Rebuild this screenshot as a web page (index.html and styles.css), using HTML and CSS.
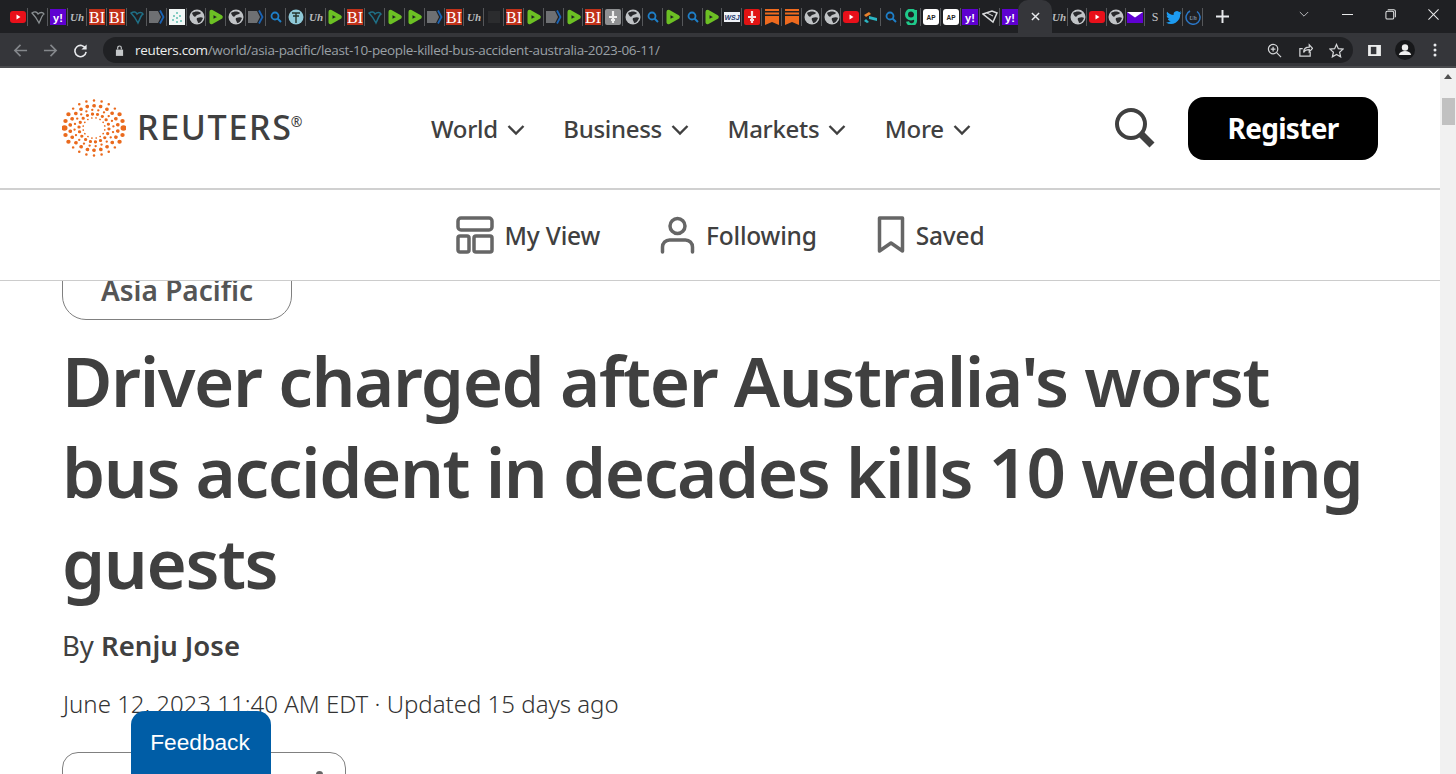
FILE: index.html
```html
<!DOCTYPE html>
<html lang="en">
<head>
<meta charset="utf-8">
<title>Driver charged after Australia's worst bus accident in decades kills 10 wedding guests | Reuters</title>
<link rel="stylesheet" href="styles.css">
</head>
<body>
<svg class="sprite" aria-hidden="true">
  <defs>
    <symbol id="yt" viewBox="0 0 16 16"><rect y="2" width="16" height="12" rx="3" fill="#e8101a"/><path d="M6.500 5.500v5l4-2.500z" fill="#fff"/></symbol>
    <symbol id="heart" viewBox="0 0 16 16"><path d="M2 4c3-2 5-1 6 1 2-2 5-2 6 0-2 1-3 5-5 9C7 10 5 7 2 4z" fill="none" stroke="#8a8f92" stroke-width="1.300"/></symbol>
    <symbol id="heartb" viewBox="0 0 16 16"><path d="M2 4c3-2 5-1 6 1 2-2 5-2 6 0-2 1-3 5-5 9C7 10 5 7 2 4z" fill="none" stroke="#1f6f86" stroke-width="1.500"/></symbol>
    <symbol id="yh" viewBox="0 0 16 16"><rect width="16" height="16" fill="#5f01d1"/><text x="8" y="12.500" text-anchor="middle" class="fav-y">y!</text></symbol>
    <symbol id="uh" viewBox="0 0 16 16"><text x="8" y="12" text-anchor="middle" class="fav-uh">Uh</text></symbol>
    <symbol id="bi" viewBox="0 0 16 16"><rect width="16" height="16" fill="#c1321a"/><text x="8" y="13.500" text-anchor="middle" class="fav-bi">BI</text></symbol>
    <symbol id="dd" viewBox="0 0 16 16"><path d="M0 2h9l3 6-3 6H0z" fill="#6e7073"/><path d="M11 1.500l3.500 6.500-3.500 6.500" fill="none" stroke="#1a63b5" stroke-width="1.800"/></symbol>
    <symbol id="grid" viewBox="0 0 16 16"><rect width="16" height="16" fill="#f2f7f6"/><g fill="#5fbfb0"><circle cx="8" cy="4" r="1"/><circle cx="5" cy="7" r="1"/><circle cx="11" cy="7" r="1"/><circle cx="8" cy="9" r="1"/><circle cx="4" cy="11" r="1"/><circle cx="12" cy="12" r="1"/><circle cx="8" cy="13" r="1"/></g></symbol>
    <symbol id="globe" viewBox="0 0 16 16"><circle cx="8" cy="8" r="7.500" fill="#c0c3c6"/><path d="M3 4c3-2 7-2 9 0-1 2-4 1-5 3s-3 0-4-3zM8 9c3-1 5-1 6 0-1 3-3 5-5 5 0-2-2-3-1-5z" fill="#28292c"/></symbol>
    <symbol id="play" viewBox="0 0 16 16"><path d="M3.500 2.800 12.800 8l-9.300 5.200z" fill="#1f2023" stroke="#6cc024" stroke-width="4" stroke-linejoin="round"/></symbol>
    <symbol id="search" viewBox="0 0 16 16"><circle cx="7" cy="7" r="3.500" fill="none" stroke="#1e7fc8" stroke-width="1.800"/><path d="m9.500 9.500 3.500 3.500" stroke="#1e7fc8" stroke-width="2"/></symbol>
    <symbol id="tree" viewBox="0 0 16 16"><circle cx="8" cy="8" r="7.500" fill="#8fc9d8"/><path d="M4 4h8M8 4v10M5 7h6" stroke="#24352e" stroke-width="1.400"/></symbol>
    <symbol id="mic" viewBox="0 0 16 16"><rect width="16" height="16" rx="2" fill="#8f9092"/><path d="M8 2v5M4 8h8M6 11h4M8 8v6" stroke="#eee" stroke-width="2.200"/></symbol>
    <symbol id="wsj" viewBox="0 0 16 16"><rect y="3" width="16" height="10" fill="#eef1f6"/><text x="8" y="11" text-anchor="middle" class="fav-wsj">WSJ</text></symbol>
    <symbol id="red" viewBox="0 0 16 16"><rect width="16" height="16" rx="2" fill="#e11313"/><path d="M8 2v5M4 8h8M6 11h4M8 8v6" stroke="#f4dede" stroke-width="2.200"/></symbol>
    <symbol id="bm" viewBox="0 0 16 16"><path d="M1 0h14v2H1zM1 3.500h14v2H1zM1 7h14v9l-7-3-7 3z" fill="#ee6a1f"/></symbol>
    <symbol id="teal" viewBox="0 0 16 16"><path d="M1 6l5-3 2 2-5 3z" fill="#e9822c"/><path d="M6 7l8 2v3l-8-2z" fill="#2bb6c4"/><path d="M3 10l3 3-2 1-3-2z" fill="#2bb6c4"/></symbol>
    <symbol id="gg" viewBox="0 0 16 16"><path d="M3.500 5.500a4.500 4.500 0 1 0 9 0 4.500 4.500 0 1 0-9 0zM12.500 1v10a4 4 0 0 1-8 1.500" fill="none" stroke="#1fc98a" stroke-width="3"/></symbol>
    <symbol id="ap" viewBox="0 0 16 16"><rect width="16" height="16" rx="3" fill="#fff"/><text x="8" y="10.500" text-anchor="middle" class="fav-ap">AP</text></symbol>
    <symbol id="gem" viewBox="0 0 16 16"><path d="M1 5l9-3 5 2-4 9z" fill="none" stroke="#d8dadc" stroke-width="1.500"/><path d="M5 4l6 3" stroke="#d8dadc"/></symbol>
    <symbol id="mail" viewBox="0 0 16 16"><path d="M0 3h16v11H0z" fill="#5f01d1"/><path d="M0 3h16L8 8.500z" fill="#fff"/></symbol>
    <symbol id="ss" viewBox="0 0 16 16"><text x="8" y="12" text-anchor="middle" class="fav-s">S</text></symbol>
    <symbol id="tw" viewBox="0 0 16 16"><path d="M15.500 3.500c-.6.300-1.200.4-1.800.5.700-.4 1.200-1 1.400-1.800-.6.400-1.300.6-2 .8A3.200 3.200 0 0 0 7.700 6C5 5.900 2.700 4.600 1.100 2.700c-.8 1.400-.4 3.300 1 4.300-.5 0-1-.2-1.400-.4 0 1.600 1.100 2.900 2.600 3.200-.5.100-1 .2-1.500.1.400 1.300 1.600 2.200 3 2.200A6.500 6.500 0 0 1 0 13.400 9.200 9.200 0 0 0 14.200 5.200c.5-.5 1-1 1.300-1.700z" fill="#1d9bf0"/></symbol>
    <symbol id="ring" viewBox="0 0 16 16"><path d="M5 2a7 7 0 1 0 7 .5" fill="none" stroke="#2a76c6" stroke-width="1.500"/><text x="8" y="10.500" text-anchor="middle" class="fav-ring">Uh</text></symbol>
    <symbol id="dark" viewBox="0 0 16 16"><rect x="2" y="2" width="12" height="12" fill="#2b2c2e"/></symbol>
    <symbol id="chev" viewBox="0 0 18 12"><path d="m1.500 2 7.500 7.500L16.500 2" fill="none" stroke="currentColor" stroke-width="2.400"/></symbol>
  </defs>
</svg>

<header class="chrome">
  <div class="tabstrip">
    <div class="tabs">
      <span class="tab"><svg class="fav"><use href="#yt"/></svg></span>
      <span class="tab"><svg class="fav"><use href="#heart"/></svg></span>
      <span class="tab"><svg class="fav"><use href="#yh"/></svg></span>
      <span class="tab"><svg class="fav"><use href="#uh"/></svg></span>
      <span class="tab"><svg class="fav"><use href="#bi"/></svg></span>
      <span class="tab"><svg class="fav"><use href="#bi"/></svg></span>
      <span class="tab"><svg class="fav"><use href="#heartb"/></svg></span>
      <span class="tab"><svg class="fav"><use href="#dd"/></svg></span>
      <span class="tab"><svg class="fav"><use href="#grid"/></svg></span>
      <span class="tab"><svg class="fav"><use href="#globe"/></svg></span>
      <span class="tab"><svg class="fav"><use href="#play"/></svg></span>
      <span class="tab"><svg class="fav"><use href="#globe"/></svg></span>
      <span class="tab"><svg class="fav"><use href="#dd"/></svg></span>
      <span class="tab"><svg class="fav"><use href="#search"/></svg></span>
      <span class="tab"><svg class="fav"><use href="#tree"/></svg></span>
      <span class="tab"><svg class="fav"><use href="#uh"/></svg></span>
      <span class="tab"><svg class="fav"><use href="#play"/></svg></span>
      <span class="tab"><svg class="fav"><use href="#bi"/></svg></span>
      <span class="tab"><svg class="fav"><use href="#heartb"/></svg></span>
      <span class="tab"><svg class="fav"><use href="#play"/></svg></span>
      <span class="tab"><svg class="fav"><use href="#play"/></svg></span>
      <span class="tab"><svg class="fav"><use href="#dd"/></svg></span>
      <span class="tab"><svg class="fav"><use href="#bi"/></svg></span>
      <span class="tab"><svg class="fav"><use href="#uh"/></svg></span>
      <span class="tab"><svg class="fav"><use href="#dark"/></svg></span>
      <span class="tab"><svg class="fav"><use href="#bi"/></svg></span>
      <span class="tab"><svg class="fav"><use href="#play"/></svg></span>
      <span class="tab"><svg class="fav"><use href="#dd"/></svg></span>
      <span class="tab"><svg class="fav"><use href="#play"/></svg></span>
      <span class="tab"><svg class="fav"><use href="#bi"/></svg></span>
      <span class="tab"><svg class="fav"><use href="#mic"/></svg></span>
      <span class="tab"><svg class="fav"><use href="#globe"/></svg></span>
      <span class="tab"><svg class="fav"><use href="#search"/></svg></span>
      <span class="tab"><svg class="fav"><use href="#play"/></svg></span>
      <span class="tab"><svg class="fav"><use href="#search"/></svg></span>
      <span class="tab"><svg class="fav"><use href="#play"/></svg></span>
      <span class="tab"><svg class="fav"><use href="#wsj"/></svg></span>
      <span class="tab"><svg class="fav"><use href="#red"/></svg></span>
      <span class="tab"><svg class="fav"><use href="#bm"/></svg></span>
      <span class="tab"><svg class="fav"><use href="#bm"/></svg></span>
      <span class="tab"><svg class="fav"><use href="#globe"/></svg></span>
      <span class="tab"><svg class="fav"><use href="#globe"/></svg></span>
      <span class="tab"><svg class="fav"><use href="#yt"/></svg></span>
      <span class="tab"><svg class="fav"><use href="#teal"/></svg></span>
      <span class="tab"><svg class="fav"><use href="#search"/></svg></span>
      <span class="tab"><svg class="fav"><use href="#gg"/></svg></span>
      <span class="tab"><svg class="fav"><use href="#ap"/></svg></span>
      <span class="tab"><svg class="fav"><use href="#ap"/></svg></span>
      <span class="tab"><svg class="fav"><use href="#yh"/></svg></span>
      <span class="tab"><svg class="fav"><use href="#gem"/></svg></span>
      <span class="tab tab-last"><svg class="fav"><use href="#yh"/></svg></span>
      <span class="tab-active"><svg class="tab-x" viewBox="0 0 10 10"><path d="m1 1 8 8M9 1 1 9"/></svg></span>
      <span class="tab narrow"><svg class="fav"><use href="#uh"/></svg></span>
      <span class="tab narrow"><svg class="fav"><use href="#globe"/></svg></span>
      <span class="tab narrow"><svg class="fav"><use href="#yt"/></svg></span>
      <span class="tab narrow"><svg class="fav"><use href="#globe"/></svg></span>
      <span class="tab narrow"><svg class="fav"><use href="#mail"/></svg></span>
      <span class="tab narrow"><svg class="fav"><use href="#ss"/></svg></span>
      <span class="tab narrow"><svg class="fav"><use href="#tw"/></svg></span>
      <span class="tab narrow"><svg class="fav"><use href="#ring"/></svg></span>
      <svg class="newtab" viewBox="0 0 12 12"><path d="M6 0v12M0 6h12"/></svg>
    </div>
    <div class="winctl">
      <svg class="win-chev" viewBox="0 0 12 8"><path d="m1 1 5 5 5-5"/></svg>
      <svg class="win-btn" viewBox="0 0 12 12"><path d="M0 6h12"/></svg>
      <svg class="win-btn" viewBox="0 0 12 12"><rect x="1" y="2.500" width="8.500" height="8.500" rx="1.500"/><path d="M3 .8h6.500A1.800 1.800 0 0 1 11.300 2.600V9"/></svg>
      <svg class="win-btn" viewBox="0 0 12 12"><path d="m.5.500 11 11M11.500.500l-11 11"/></svg>
    </div>
  </div>
  <div class="toolbar">
    <div class="navbtns">
      <svg class="tool dim" viewBox="0 0 16 16"><path d="M15 8H2M8 2 2 8l6 6"/></svg>
      <svg class="tool dim" viewBox="0 0 16 16"><path d="M1 8h13M8 2l6 6-6 6"/></svg>
      <svg class="tool" viewBox="0 0 16 16"><path d="M13.500 6A6 6 0 1 0 14 9.500"/><path class="fill" d="M14.500 1.500v5.500H9z"/></svg>
    </div>
    <div class="omnibox">
      <svg class="lock" viewBox="0 0 10 12"><path d="M1 5h8v7H1z" fill="#c4c7c9"/><path d="M3 5V3a2 2 0 0 1 4 0v2" fill="none" stroke="#c4c7c9" stroke-width="1.300"/></svg>
      <span class="url"><b class="host">reuters.com</b>/world/asia-pacific/least-10-people-killed-bus-accident-australia-2023-06-11/</span>
      <div class="omni-right">
        <svg class="tool small" viewBox="0 0 16 16"><circle cx="6.500" cy="6.500" r="5"/><path d="M10 10l5 5M4 6.500h5M6.500 4v5"/></svg>
        <svg class="tool small" viewBox="0 0 16 16"><path d="M13 9.500V14H2V6h3M6 10c0-4 3-5.500 6-5.500V2l3.500 3.800L12 9.500V7c-3 0-5 1-6 3z"/></svg>
        <svg class="tool small" viewBox="0 0 16 16"><path d="M8 1.500 10 6l5 .5-3.700 3.300 1.100 5L8 12.200l-4.400 2.600 1.100-5L1 6.500 6 6z"/></svg>
      </div>
    </div>
    <div class="toolright">
      <svg class="panel" viewBox="0 0 14 12"><rect width="14" height="12" fill="#eceded"/><rect x="3" y="2" width="6" height="8" fill="#35363a"/></svg>
      <svg class="avatar" viewBox="0 0 20 20"><circle cx="10" cy="10" r="10" fill="#17181a"/><circle cx="10" cy="7.500" r="3.200" fill="#eee"/><path d="M3.800 15c.8-3 3.200-4 6.200-4s5.400 1 6.200 4z" fill="#eee"/></svg>
      <svg class="kebab" viewBox="0 0 4 14"><circle cx="2" cy="2" r="1.500"/><circle cx="2" cy="7" r="1.500"/><circle cx="2" cy="12" r="1.500"/></svg>
    </div>
  </div>
</header>

<div class="viewport">
  <div class="page">
    <div class="masthead">
      <a class="brand">
        <svg class="brand-mark" viewBox="0 0 64 58">
          <g transform="translate(32 29) scale(1 .93)" fill="none" stroke="#ea6a1d" stroke-linecap="round">
            <circle class="r" r="29.500" pathLength="24" stroke-width="2.600"/>
            <circle class="r-mid" r="29.500" pathLength="24" stroke-width="4.400"/>
            <circle class="r-big" r="29.500" pathLength="24" stroke-width="6"/>
            <circle class="r" r="24" pathLength="22" stroke-width="3.800" transform="rotate(8)"/>
            <circle class="r" r="19.500" pathLength="20" stroke-width="2.400" transform="rotate(-5)"/>
            <circle class="r" r="15" pathLength="18" stroke-width="3.300" transform="rotate(4)"/>
            <circle class="r" r="11" pathLength="16" stroke-width="1.800" transform="rotate(11)"/>
          </g>
        </svg>
        <span class="wordmark">REUTERS<sup class="reg">®</sup></span>
      </a>
      <nav class="mainnav">
        <a class="navitem">World<svg class="chev"><use href="#chev"/></svg></a>
        <a class="navitem">Business<svg class="chev"><use href="#chev"/></svg></a>
        <a class="navitem">Markets<svg class="chev"><use href="#chev"/></svg></a>
        <a class="navitem">More<svg class="chev"><use href="#chev"/></svg></a>
      </nav>
      <svg class="searchicon" viewBox="0 0 40 40"><circle cx="16" cy="16" r="14" fill="none" stroke="#404040" stroke-width="4"/><path d="m26 26 11 11" stroke="#404040" stroke-width="7"/></svg>
      <a class="register">Register</a>
    </div>
    <div class="subnav">
      <a class="subitem">
        <svg class="ico-view" viewBox="0 0 38 38"><g fill="none" stroke="#666" stroke-width="3.500"><rect x="2" y="2" width="34" height="12" rx="3"/><rect x="2" y="20" width="11" height="16" rx="2"/><rect x="18" y="20" width="18" height="16" rx="2"/></g></svg>
        My View
      </a>
      <a class="subitem">
        <svg class="ico-follow" viewBox="0 0 34 38"><g fill="none" stroke="#666" stroke-width="3.500" stroke-linecap="round"><circle cx="17" cy="10" r="7.500"/><path d="M2 36v-5a7 7 0 0 1 7-7h16a7 7 0 0 1 7 7v5"/></g></svg>
        Following
      </a>
      <a class="subitem">
        <svg class="ico-saved" viewBox="0 0 28 38"><path d="M2.500 2h23v33L14 27 2.500 35z" fill="none" stroke="#666" stroke-width="3.500" stroke-linejoin="round"/></svg>
        Saved
      </a>
    </div>
    <main class="article">
      <a class="topic">Asia Pacific</a>
      <h1 class="headline">Driver charged after Australia's worst bus accident in decades kills 10 wedding guests</h1>
      <p class="byline">By <b class="author">Renju Jose</b></p>
      <p class="dateline">June 12, 2023 11:40 AM EDT · Updated 15 days ago</p>
      <div class="sharebox"><span class="sharedot"></span></div>
    </main>
    <a class="feedback">Feedback</a>
  </div>
  <div class="scrollbar">
    <svg class="sb-up" viewBox="0 0 8 5"><path d="M4 0l4 5H0z"/></svg>
    <div class="sb-thumb"></div>
  </div>
</div>
</body>
</html>
```
FILE: styles.css
```css
* { box-sizing: border-box; }
html, body { margin: 0; height: 100%; overflow: hidden; }
body { display: flex; flex-direction: column; background: #fff; font-family: "Noto Sans", "Open Sans", sans-serif; color: #404040; }
a { color: inherit; text-decoration: none; }
.sprite { width: 0; height: 0; position: absolute; }

/* browser chrome */
.chrome { flex: none; height: 68px; background: #202124; }
.tabstrip { height: 33px; display: flex; background: #1f2023; }
.tabs { display: flex; align-items: center; padding-left: 8px; flex: 1; }
.tab { width: 19.85px; height: 33px; display: flex; align-items: center; justify-content: center; position: relative; flex: none; }
.tab::after { content: ""; position: absolute; right: 0; top: 8px; height: 18px; width: 1px; background: #55575a; }
.tab-last::after { display: none; }
.tab.narrow { width: 19.2px; }
.fav { width: 16px; height: 16px; display: block; }
.fav-y { font: 800 11px "Liberation Sans", sans-serif; fill: #fff; }
.fav-uh { font: italic 700 11px "Liberation Serif", serif; fill: #b8babc; }
.fav-bi { font: 400 16px "Liberation Serif", serif; fill: #fff; }
.fav-wsj { font: italic 800 7px "Liberation Sans", sans-serif; fill: #1e3a6e; }
.fav-ap { font: 800 6.500px "Liberation Sans", sans-serif; fill: #222; }
.fav-s { font: 400 12px "Liberation Serif", serif; fill: #c4c6c8; }
.fav-ring { font: italic 700 6px "Liberation Serif", serif; fill: #7d8ea3; }
.tab-active { width: 34px; height: 33px; flex: none; background: #35363a; border-radius: 10px 10px 0 0; display: flex; align-items: center; justify-content: center; margin: 0 -3px 0 -2px; }
.tab-x { width: 9px; height: 9px; stroke: #e8eaed; stroke-width: 1.600; fill: none; }
.newtab { width: 13px; height: 13px; margin-left: 13px; stroke: #e8eaed; stroke-width: 1.800; fill: none; flex: none; }
.winctl { display: flex; align-items: center; flex: none; width: 160px; height: 29px; padding-left: 3px; }
.win-chev { width: 10px; height: 7px; fill: none; stroke: #c4c6c8; stroke-width: 1.100; margin-right: 33px; flex: none; }
.win-btn { width: 11px; height: 11px; fill: none; stroke: #e8e9ea; stroke-width: 1.100; margin-right: 32px; flex: none; }
.toolbar { height: 35px; display: flex; align-items: center; background: #35363a; border-bottom: 2px solid #4a4b4e; padding-top: 1px; }
.navbtns { width: 103px; display: flex; align-items: center; gap: 15px; padding-left: 13px; flex: none; }
.tool { width: 15px; height: 15px; fill: none; stroke: #e8eaed; stroke-width: 1.700; flex: none; }
.tool.dim { stroke: #85888c; }
.tool .fill { fill: #e8eaed; stroke: none; }
.tool.small { stroke: #d4d6d8; stroke-width: 1.300; }
.omnibox { width: 1250px; height: 26px; flex: none; border-radius: 13px; background: #202124; display: flex; align-items: center; padding-left: 12px; }
.lock { width: 9px; height: 11px; flex: none; }
.url { margin-left: 11px; font: 400 13.500px "Open Sans", sans-serif; color: #9aa0a6; white-space: nowrap; letter-spacing: -.33px; }
.host { font-weight: 400; color: #eceded; }
.omni-right { margin-left: auto; display: flex; gap: 16px; padding-right: 9px; }
.toolright { display: flex; align-items: center; flex: 1; padding-left: 15px; }
.panel { width: 13px; height: 11px; flex: none; }
.avatar { width: 20px; height: 20px; margin-left: 14px; flex: none; }
.kebab { width: 4px; height: 14px; margin-left: 18px; fill: #e8eaed; flex: none; }

/* page */
.viewport { flex: 1; min-height: 0; display: flex; }
.page { flex: 1; min-width: 0; display: flex; flex-direction: column; position: relative; overflow: hidden; }
.scrollbar { width: 16px; flex: none; background: #f1f1f1; display: flex; flex-direction: column; align-items: center; padding-top: 6px; }
.sb-up { width: 8px; height: 5px; fill: #505050; }
.sb-thumb { width: 13px; height: 27px; margin-top: 19px; background: #c1c1c1; }

.masthead { height: 122px; flex: none; display: flex; align-items: center; padding: 0 62px; border-bottom: 2px solid #d0d0d0; position: relative; z-index: 1; background: #fff; }
.brand { display: flex; align-items: center; gap: 11px; width: 369px; flex: none; }
.brand-mark { width: 64px; height: 58px; flex: none; }
.wordmark { font: 500 34px "Noto Sans", sans-serif; letter-spacing: 1.700px; color: #404040; line-height: 1; margin-top: -2px; }
.reg { font-size: 14px; vertical-align: 13px; line-height: 0; font-weight: 400; letter-spacing: 0; margin-left: -2px; }
.r { stroke-dasharray: 0 1; }
.r-mid { stroke-dasharray: 0 1 0 1 0 1 0 1 0 8 0 1 0 1 0 1 0 1 0 8; stroke-dashoffset: 2; }
.r-big { stroke-dasharray: 0 12; }
.mainnav { display: flex; gap: 38.500px; flex: none; }
.navitem { display: flex; align-items: center; gap: 9px; font: 500 24px "Noto Sans", sans-serif; letter-spacing: -.3px; color: #404040; }
.chev { width: 18px; height: 12px; color: #404040; margin-top: 3px; }
.searchicon { width: 40px; height: 40px; margin-left: auto; flex: none; }
.register { width: 190px; height: 63px; margin-left: 33px; flex: none; background: #000; color: #fff; border-radius: 16px; display: flex; align-items: center; justify-content: center; font: 700 28px "Noto Sans", sans-serif; letter-spacing: -.7px; }

.subnav { height: 91px; flex: none; display: flex; align-items: center; justify-content: center; gap: 60px; border-bottom: 1px solid #ccc; background: #fff; position: relative; z-index: 1; }
.subitem { display: flex; align-items: center; gap: 11px; font: 500 24.500px "Noto Sans", sans-serif; letter-spacing: -.2px; color: #404040; }
.ico-view { width: 38px; height: 38px; }
.ico-follow { width: 35px; height: 38px; }
.ico-saved { width: 28px; height: 38px; }

.article { flex: 1; padding: 0 62px; min-height: 0; }
.topic { display: block; width: 230px; height: 80px; margin-top: -41px; border: 1.500px solid #808080; border-radius: 24px; padding-top: 31px; text-align: center; font: 600 28px/36px "Noto Sans", sans-serif; color: #555; }
.headline { margin: 15px 0 0; font: 600 69px/91px "Noto Sans", sans-serif; color: #404040; letter-spacing: -1.400px; width: 1330px; }
.byline { margin: 20px 0 0; font: 400 27.500px/36px "Noto Sans", sans-serif; color: #404040; }
.author { font-weight: 600; }
.dateline { margin: 23px 0 0 1px; font: 300 24px/34px "Noto Sans", sans-serif; color: #333; }
.sharebox { width: 284px; height: 60px; margin-top: 31px; border: 1.500px solid #808080; border-radius: 16px; position: relative; }
.sharedot { position: absolute; right: 22px; top: 18px; width: 7px; height: 7px; border-radius: 50%; background: #666; }
.feedback { position: absolute; left: 131px; bottom: 0; width: 140px; height: 63px; padding-right: 2px; background: #005da6; color: #fff; border-radius: 14px 14px 0 0; font: 400 22.700px/62px "Liberation Sans", sans-serif; text-align: center; }
```
